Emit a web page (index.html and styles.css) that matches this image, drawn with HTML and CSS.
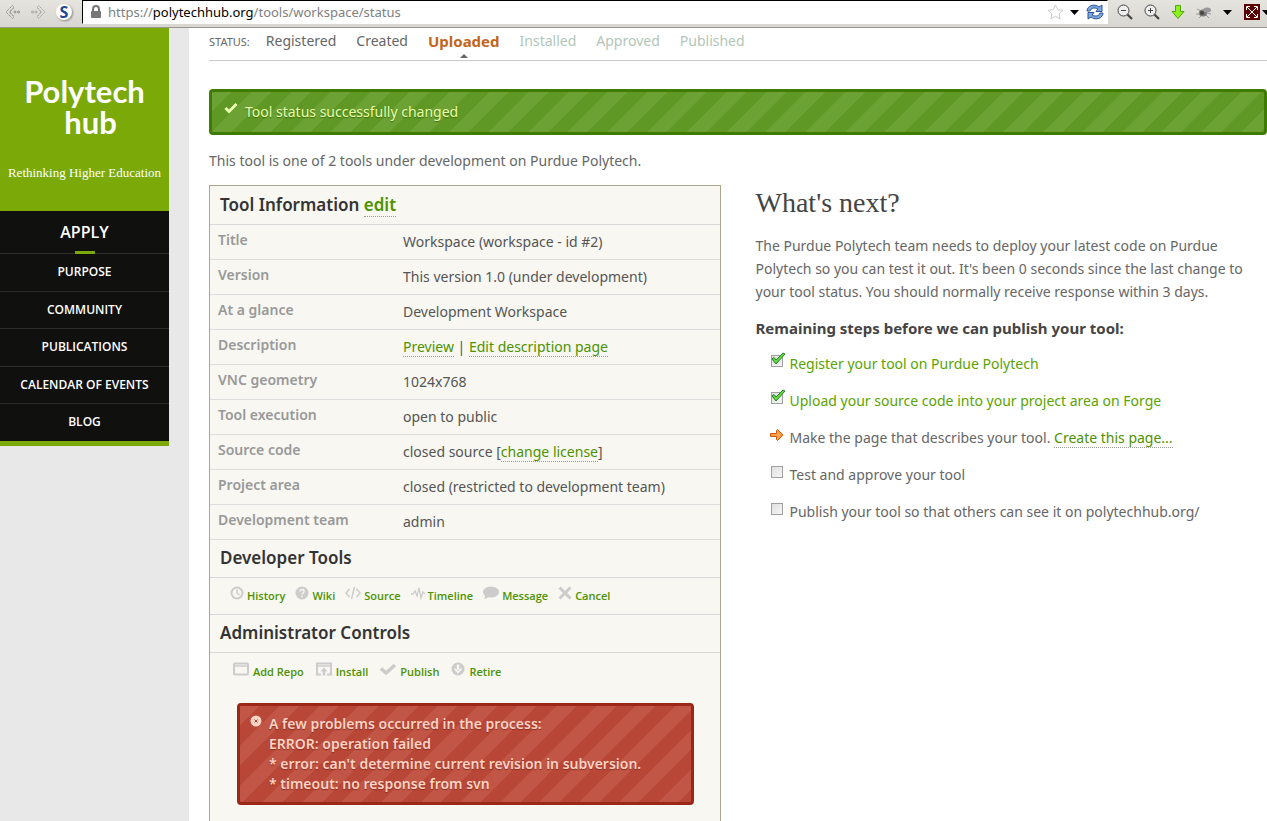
FILE: index.html
```html
<!DOCTYPE html>
<html lang="en">
<head>
<meta charset="utf-8">
<title>Polytech hub - Workspace status</title>
<link rel="stylesheet" href="styles.css">
</head>
<body>
<header class="toolbar">
  <button class="tool-btn" aria-label="Back"><svg width="17" height="16" viewBox="0 0 17 16" fill="none" stroke="#8b8b86"><path d="M8.500 1.500L2 8l6.500 6.500L10 13 5.500 8 10 3z" stroke-dasharray="1.500 .7"/><path d="M6 8l4-4M6 8l4 4" stroke-dasharray="1 1"/><circle cx="11" cy="8" r="1"/><circle cx="14.500" cy="8" r="1"/></svg></button>
  <button class="tool-btn" aria-label="Forward"><svg width="17" height="16" viewBox="0 0 17 16" fill="none" stroke="#a3a39d"><path d="M8.500 1.500L15 8l-6.500 6.500L7 13l4.500-5L7 3z" stroke-dasharray="1.500 .7"/><path d="M11 8L7 4M11 8l-4 4" stroke-dasharray="1 1"/><circle cx="6" cy="8" r="1"/><circle cx="2.500" cy="8" r="1"/></svg></button>
  <button class="tool-btn script-btn" aria-label="Script blocker">S</button>
  <div class="address">
    <svg width="12" height="14" viewBox="0 0 12 14"><path d="M3 7V4a3 3 0 0 1 6 0v3" fill="none" stroke="#777" stroke-width="2"/><rect x="1" y="6" width="10" height="7" rx="1" fill="#777"/></svg>
    <div class="url" role="textbox" aria-label="Address" contenteditable="true" spellcheck="false">https://<span class="host">polytechhub.org</span>/tools/workspace/status</div>
    <svg width="17" height="16" viewBox="0 0 17 16"><path d="M8.500 1l2.200 4.700 5.300.6-4 3.500 1.200 5.200-4.700-2.700L3.800 15 5 9.800 1 6.300l5.300-.6z" fill="#fff" stroke="#ccc"/></svg>
    <svg class="caret" width="9" height="5" viewBox="0 0 9 5"><path d="M0 0h9L4.500 5z"/></svg>
    <button class="tool-btn reload" aria-label="Reload"><svg width="18" height="18" viewBox="0 0 18 16" fill="#7fa9de" stroke="#2a5599"><path d="M1 7C1 2 8-1 13 3l3-2v6.500H10L12 5C8 3 5 4 4 7z"/><path d="M17 9c0 5-7 8-12 4l-3 2V8.500h6L6 11c4 2 7 1 8-2z"/></svg></button>
  </div>
  <button class="tool-btn" aria-label="Zoom out"><svg width="18" height="18" viewBox="0 0 18 18" fill="none" stroke="#444"><circle cx="7.500" cy="7.500" r="5.500" fill="#eee"/><path d="M5 7.500h5"/><path d="M11.500 11.500L16 16" stroke-width="2.200"/></svg></button>
  <button class="tool-btn" aria-label="Zoom in"><svg width="18" height="18" viewBox="0 0 18 18" fill="none" stroke="#444"><circle cx="7.500" cy="7.500" r="5.500" fill="#eee"/><path d="M5 7.500h5M7.500 5v5"/><path d="M11.500 11.500L16 16" stroke-width="2.200"/></svg></button>
  <button class="tool-btn" aria-label="Downloads"><svg width="16" height="16" viewBox="0 0 16 16"><path d="M5.500 1.500h5v6H14L8 14.500 2 7.500h3.500z" fill="#8ff01f" stroke="#4ea60a"/></svg></button>
  <button class="tool-btn" aria-label="Firebug"><svg width="18" height="16" viewBox="0 0 18 16"><path d="M2 5l4 2M1 10h5M4 14l3-3M11 11l3 3M12 9l4 1" stroke="#999"/><ellipse cx="8" cy="9" rx="4" ry="3.500" fill="#777"/><ellipse cx="12" cy="6" rx="4" ry="2.500" fill="#999"/><circle cx="7" cy="9" r="2" fill="#444"/></svg></button>
  <svg class="caret bug-caret" width="9" height="5" viewBox="0 0 9 5"><path d="M0 0h9L4.500 5z"/></svg>
  <button class="tool-btn" aria-label="Fullscreen"><svg width="16" height="16" viewBox="0 0 16 16"><rect width="16" height="16" fill="#5c0505"/><path d="M3 3l10 10M13 3L3 13M2.500 6V2.500H6M10 2.500h3.500V6M13.500 10v3.500H10M6 13.500H2.500V10" fill="none" stroke="#fff"/></svg></button>
  <svg class="caret last-caret" width="9" height="5" viewBox="0 0 9 5"><path d="M0 0h9L4.500 5z"/></svg>
</header>

<div class="page">
  <aside class="sidebar">
    <div class="brand">
      <a class="logo" href="#"><span>Polytech</span><span class="logo-hub">hub</span></a>
      <p class="tagline">Rethinking Higher Education</p>
    </div>
    <nav class="nav">
      <a class="nav-apply" href="#">APPLY</a>
      <a href="#">PURPOSE</a>
      <a href="#">COMMUNITY</a>
      <a href="#">PUBLICATIONS</a>
      <a href="#">CALENDAR OF EVENTS</a>
      <a href="#">BLOG</a>
    </nav>
  </aside>

  <main class="content">
    <ol class="status">
      <li class="status-label">STATUS:</li>
      <li>Registered</li>
      <li>Created</li>
      <li class="current">Uploaded</li>
      <li class="later">Installed</li>
      <li class="later">Approved</li>
      <li class="later">Published</li>
    </ol>

    <p class="notice passed"><svg width="14" height="12" viewBox="0 0 14 12"><path d="M1.500 6l3.500 3.500 7.500-7.500" fill="none" stroke="#efffb0" stroke-width="3"/></svg>Tool status successfully changed</p>
    <p class="intro">This tool is one of 2 tools under development on Purdue Polytech.</p>

    <div class="columns">
      <section class="panel">
        <table class="info">
          <tbody>
            <tr class="head"><th colspan="2">Tool Information <a href="#">edit</a></th></tr>
            <tr><th scope="row">Title</th><td>Workspace (workspace - id #2)</td></tr>
            <tr><th scope="row">Version</th><td>This version 1.0 (under development)</td></tr>
            <tr><th scope="row">At a glance</th><td>Development Workspace</td></tr>
            <tr><th scope="row">Description</th><td><a href="#">Preview</a> | <a href="#">Edit description page</a></td></tr>
            <tr><th scope="row">VNC geometry</th><td>1024x768</td></tr>
            <tr><th scope="row">Tool execution</th><td>open to public</td></tr>
            <tr><th scope="row">Source code</th><td>closed source [<a href="#">change license</a>]</td></tr>
            <tr><th scope="row">Project area</th><td>closed (restricted to development team)</td></tr>
            <tr><th scope="row">Development team</th><td>admin</td></tr>
          </tbody>
        </table>
        <h3 class="panel-title">Developer Tools</h3>
        <ul class="actions dev">
          <li><a href="#"><svg width="14" height="14" viewBox="0 0 14 14" fill="none" stroke="#ccc" stroke-width="2"><circle cx="7" cy="7" r="5.500"/><path d="M7 3.500V7l2.500 2" stroke-width="1.500"/></svg>History</a></li>
          <li><a href="#"><svg width="14" height="14" viewBox="0 0 14 14"><circle cx="7" cy="7" r="6.500" fill="#ccc"/><path d="M5 5.500c0-3 4-2.500 4 0C9 7 7 7 7 8.500M7 9.700v1.500" fill="none" stroke="#f8f7f2" stroke-width="1.500"/></svg>Wiki</a></li>
          <li><a href="#"><svg width="16" height="14" viewBox="0 0 16 14" fill="none" stroke="#ccc" stroke-width="1.500"><path d="M4.500 3L1 7l3.500 4M11.500 3L15 7l-3.500 4M9.500 1l-3 12"/></svg>Source</a></li>
          <li><a href="#"><svg width="14" height="14" viewBox="0 0 14 14" fill="none" stroke="#ccc" stroke-width="1.300"><path d="M0 8h2l2-3 2 5L8 2l2 10 2-6 2 2"/></svg>Timeline</a></li>
          <li><a href="#"><svg width="16" height="14" viewBox="0 0 16 14" fill="#ccc"><ellipse cx="8" cy="6" rx="8" ry="5.500"/><path d="M2 9c0 2 0 3-1.500 4C3 13 5 12 6 10z"/></svg>Message</a></li>
          <li><a href="#"><svg width="14" height="14" viewBox="0 0 14 14" stroke="#ccc" stroke-width="3"><path d="M1.500 1.500l11 11M12.500 1.500l-11 11"/></svg>Cancel</a></li>
        </ul>
        <h3 class="panel-title">Administrator Controls</h3>
        <ul class="actions admin">
          <li><a href="#"><svg width="16" height="14" viewBox="0 0 16 14" fill="none" stroke="#ccc" stroke-width="2"><rect x="1" y="1.500" width="14" height="11" rx="1"/><path d="M1 4h14" stroke-width="1.500"/></svg>Add Repo</a></li>
          <li><a href="#"><svg width="16" height="14" viewBox="0 0 16 14" fill="none" stroke="#ccc" stroke-width="2"><path d="M5 12.500H1v-11h14v11h-4"/><path d="M1 4h14" stroke-width="1.500"/><path d="M8 13.500V8" stroke-width="2.500"/><path d="M4.500 9.500L8 5.500l3.500 4z" fill="#ccc" stroke="none"/></svg>Install</a></li>
          <li><a href="#"><svg width="16" height="14" viewBox="0 0 16 14" fill="none" stroke="#ccc" stroke-width="3.500"><path d="M1 6.500l5 4.500 9-8"/></svg>Publish</a></li>
          <li><a href="#"><svg width="14" height="14" viewBox="0 0 14 14"><circle cx="7" cy="7" r="6.500" fill="#ccc"/><path d="M7 2.500V8" stroke="#f8f7f2" stroke-width="2.500"/><path d="M3.500 6.500L7 10.500l3.500-4" fill="none" stroke="#f8f7f2" stroke-width="1.500"/></svg>Retire</a></li>
        </ul>
        <div class="notice error">
          <svg width="12" height="12" viewBox="0 0 12 12"><circle cx="6" cy="6" r="5.500" fill="#fdd3c5"/><path d="M4.500 4.500l3 3M7.500 4.500l-3 3" stroke="#a5432f"/></svg>
          <p>A few problems occurred in the process:<br>ERROR: operation failed<br>* error: can't determine current revision in subversion.<br>* timeout: no response from svn</p>
        </div>
      </section>

      <section class="next">
        <h2>What's next?</h2>
        <p>The Purdue Polytech team needs to deploy your latest code on Purdue Polytech so you can test it out. It's been 0 seconds since the last change to your tool status. You should normally receive response within 3 days.</p>
        <h4>Remaining steps before we can publish your tool:</h4>
        <ul class="steps">
          <li class="done"><span class="mark"><input type="checkbox" id="s1" checked><svg width="16" height="14" viewBox="0 0 16 14"><path d="M2 7l2-1.500L6 8l7-7 2 1-9 10z" fill="#65d83c" stroke="#23802a"/></svg></span><label for="s1">Register your tool on Purdue Polytech</label></li>
          <li class="done"><span class="mark"><input type="checkbox" id="s2" checked><svg width="16" height="14" viewBox="0 0 16 14"><path d="M2 7l2-1.500L6 8l7-7 2 1-9 10z" fill="#65d83c" stroke="#23802a"/></svg></span><label for="s2">Upload your source code into your project area on Forge</label></li>
          <li><span class="mark arrow"><svg width="14" height="12" viewBox="0 0 14 12"><path d="M.5 4.500h6v-3l1-1L13 6l-5.500 5.500-1-1v-3h-6z" fill="#ffa14a" stroke="#cc5510"/></svg></span><span>Make the page that describes your tool. <a href="#">Create this page...</a></span></li>
          <li><span class="mark"><input type="checkbox" id="s4"></span><label for="s4">Test and approve your tool</label></li>
          <li><span class="mark"><input type="checkbox" id="s5"></span><label for="s5">Publish your tool so that others can see it on polytechhub.org/</label></li>
        </ul>
      </section>
    </div>
  </main>
</div>
</body>
</html>
```

FILE: styles.css
```css
* { box-sizing: border-box; }
body {
  margin: 0;
  height: 100vh;
  display: flex;
  flex-direction: column;
  overflow: hidden;
  font: 14px/22px "Noto Sans", "Open Sans", sans-serif;
  color: #666;
  background: #fff;
}
svg { display: block; flex: none; }
p, h2, h3, h4, ul, ol { margin: 0; padding: 0; }
ul, ol { list-style: none; }
a { color: #4d9200; text-decoration: none; }
button { padding: 0; border: 0; background: none; font: inherit; }

/* Browser toolbar */
.toolbar {
  flex: none;
  display: flex;
  align-items: center;
  gap: 8px;
  height: 28px;
  padding: 0 0 3px 4px;
  overflow: hidden;
  background: linear-gradient(#e6e4df, #d8d6d0);
  border-bottom: 1px solid #98968c;
}
.tool-btn { flex: none; display: block; }
.tool-btn + .tool-btn { margin-left: 1px; }
.script-btn {
  width: 16px;
  height: 16px;
  border-radius: 50%;
  background: #fff;
  box-shadow: 1px 1px 2px #888;
  color: #1b4796;
  font: bold 16px/16px "Open Sans", sans-serif;
}
.address {
  flex: 1;
  display: flex;
  align-items: center;
  gap: 6px;
  height: 24px;
  margin-left: 2px;
  padding: 0 3px 0 7px;
  background: #fff;
  border: 1px solid #fff;
  border-top: 1px solid #000;
  border-left: 1px solid #000;
}
.url {
  flex: 1;
  font: 13px/20px "Noto Sans", sans-serif;
  color: #808080;
  white-space: nowrap;
}
.host { color: #000; }
.caret { margin-right: 1px; }
.bug-caret { margin: 0 4px 0 2px; }
.last-caret { margin: 0 -4px 0 -6px; }

/* Page frame */
.page { flex: 1; display: flex; min-height: 0; }
.sidebar {
  flex: none;
  width: 189px;
  padding-right: 20px;
  background: #e8e8e8;
}
.content { flex: 1; min-width: 0; padding-left: 20px; overflow: hidden; }

.brand {
  height: 183px;
  padding-top: 48px;
  background: #7aa908;
  color: #fff;
  text-align: center;
}
.logo {
  display: flex;
  flex-direction: column;
  align-items: center;
  color: #fff;
  font: bold 31px/31px Lato, sans-serif;
}
.logo-hub { margin-left: 12px; }
.tagline {
  margin-top: 26px;
  font: 13px/18px "Liberation Serif", serif;
}
.nav { background: #10100e; border-bottom: 5px solid #7aa908; }
.nav a {
  display: block;
  padding-bottom: 1px;
  border-bottom: 1px solid #2c2c2a;
  color: #fff;
  font: 600 12px/36px "Open Sans", sans-serif;
  text-align: center;
}
.nav a:nth-child(odd) { padding-bottom: 0; }
.nav a:last-child { border-bottom: 0; }
.nav .nav-apply { font-size: 16px; line-height: 42px; position: relative; }
.nav-apply::after {
  content: "";
  position: absolute;
  left: calc(50% - 10px);
  bottom: -1px;
  width: 20px;
  height: 3px;
  background: #7aa908;
}

/* Status trail */
.status {
  display: flex;
  gap: 20px;
  height: 33px;
  padding-top: 2px;
  border-bottom: 1px solid #ccc;
}
.status-label { margin-right: -4px; font-size: 11px; line-height: 24px; }
.current { position: relative; color: #c4651a; font-size: 15px; font-weight: 700; }
.current::after {
  content: "";
  position: absolute;
  left: calc(50% - 4px);
  bottom: 2px;
  border: 4px solid transparent;
  border-top: 0;
  border-bottom-color: #666;
}
.later { color: #b2c6b8; }

/* Messages */
.notice {
  display: flex;
  align-items: flex-start;
  border: 3px solid;
  border-radius: 4px;
}
.passed {
  gap: 7px;
  margin-top: 28px;
  padding: 9px 12px;
  border-color: #3f7c06;
  background: repeating-linear-gradient(135deg, #6ca133 0 14px, #5f9824 14px 28px);
  color: #e9ffad;
  text-shadow: 0 1px 1px #3c6e08;
}
.passed svg { margin-top: 1px; }
.error {
  gap: 7px;
  margin: 21px 26px 16px 27px;
  padding: 8px 10px;
  border-color: #9b2719;
  background: repeating-linear-gradient(135deg, #c15646 0 14px, #b94737 14px 28px);
  color: #fdd3c5;
  font: 600 14px/20px "Noto Sans", "Open Sans", sans-serif;
  text-shadow: 0 1px 1px #8b2d20;
}
.error svg { margin-top: 1px; }
.intro { margin: 15px 0 13px; }

/* Two columns */
.columns { display: grid; grid-template-columns: 1fr 1fr; gap: 35px; align-items: start; }
.panel { min-height: 700px; border: 1px solid #afa58f; background: #f8f7f2; }
.info { width: 100%; border-collapse: collapse; color: #555; }
.info th, .info td { padding: 6px 8px; border-bottom: 1px solid #ddd; text-align: left; vertical-align: top; }
.info th { width: 185px; padding-top: 4px; color: #999; font-size: 14px; font-weight: 600; }
.info .head th, .panel-title {
  padding: 8px 10px;
  border-bottom: 1px solid #d8d8d8;
  color: #333;
  font-size: 17px;
  font-weight: 600;
  line-height: 22px;
}
.panel-title { padding: 7px 10px 8px; }
.info a, .steps a { border-bottom: 1px dotted #999; }
.actions { display: flex; font: 600 11px/20px "Open Sans", sans-serif; }
.actions a { display: flex; gap: 3px; }
.dev { gap: 10px; padding: 8px 20px; border-bottom: 1px solid #d8d8d8; }
.admin { gap: 12px; padding: 9px 23px 0; }
.admin a { gap: 4px; }

/* Next steps */
.next h2 { margin-top: 2px; color: #444; font: 28px/32px "Liberation Serif", serif; }
.next p { margin-top: 15px; line-height: 23px; }
.next h4 { margin-top: 14px; color: #444; font-size: 15px; font-weight: 700; }
.steps { display: flex; flex-direction: column; gap: 15px; margin: 14px 0 0 14px; }
.steps li { display: flex; gap: 4px; color: #666; }
.steps .done { color: #5ba300; }
.mark { position: relative; flex: none; width: 16px; height: 16px; }
.mark input {
  appearance: none;
  display: block;
  width: 12px;
  height: 12px;
  margin: 2px 1px;
  border: 1px solid #a0a0a0;
  background: linear-gradient(135deg, #e0e0e0, #f5f5f5);
}
.mark input + svg { position: absolute; left: 0; top: -1px; pointer-events: none; }
.arrow svg { margin-top: 2px; }
```
